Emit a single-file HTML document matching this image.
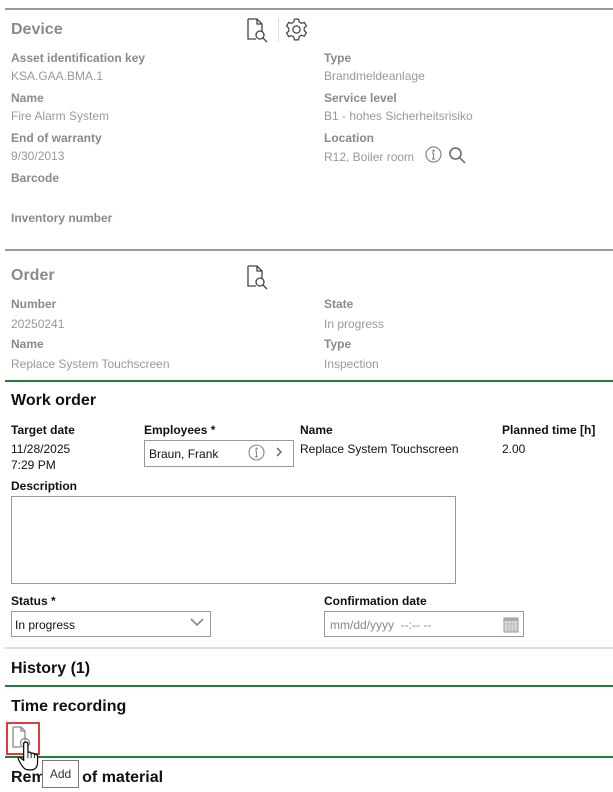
<!DOCTYPE html>
<html><head><meta charset="utf-8"><style>
body{margin:0;width:613px;height:792px;overflow:hidden;background:#fff;font-family:"Liberation Sans",sans-serif;position:relative}
div,span{position:absolute;white-space:nowrap}
.l{font-size:12px;font-weight:bold;color:#8a8a8a;line-height:14px}
.v{font-size:12px;color:#999;line-height:14px}
.lb{font-size:12px;font-weight:bold;color:#111;line-height:14px}
.vb{font-size:12px;color:#111;line-height:14px}
.h{font-size:16px;font-weight:bold;line-height:18px}
.hr{left:5px;right:0;height:2px}
.box{border:1px solid #999;background:#fff}
svg{position:absolute}
</style></head><body>
<div class="hr" style="top:8px;background:#9a9a9a"></div>
<div class="h" style="left:11px;top:21px;color:#8a8a8a">Device</div>
<svg style="left:245px;top:17px" width="26" height="26" viewBox="0 0 26 26" fill="none" stroke="#444" stroke-width="1.3"><path d="M3 2h9l5 5v8M3 2v20h8M12 2v5h5"/><circle cx="15" cy="18" r="4"/><path d="M18 21l4 4"/></svg>
<div style="left:278px;top:18px;width:1px;height:24px;background:#ddd"></div>
<svg style="left:284px;top:17px" width="25" height="25" viewBox="0 0 24 24" fill="none" stroke="#444" stroke-width="1.2"><circle cx="12" cy="12" r="3.5"/><path d="M10 2h4l.6 2.8 2.2 1.3 2.7-.9 2 3.4-2.1 1.9v2.6l2.1 1.9-2 3.4-2.7-.9-2.2 1.3L14 22h-4l-.6-2.8-2.2-1.3-2.7.9-2-3.4 2.1-1.9v-2.6L2.5 8.6l2-3.4 2.7.9 2.2-1.3z"/></svg>
<div class="l" style="left:11px;top:51px">Asset identification key</div>
<div class="v" style="left:11px;top:69px">KSA.GAA.BMA.1</div>
<div class="l" style="left:11px;top:91px">Name</div>
<div class="v" style="left:11px;top:109px">Fire Alarm System</div>
<div class="l" style="left:11px;top:131px">End of warranty</div>
<div class="v" style="left:11px;top:149px">9/30/2013</div>
<div class="l" style="left:11px;top:171px">Barcode</div>
<div class="l" style="left:11px;top:211px">Inventory number</div>
<div class="l" style="left:324px;top:51px">Type</div>
<div class="v" style="left:324px;top:69px">Brandmeldeanlage</div>
<div class="l" style="left:324px;top:91px">Service level</div>
<div class="v" style="left:324px;top:109px">B1 - hohes Sicherheitsrisiko</div>
<div class="l" style="left:324px;top:131px">Location</div>
<div class="v" style="left:324px;top:150px">R12, Boiler room</div>
<svg style="left:425px;top:146px" width="17" height="17" viewBox="0 0 17 17" fill="none" stroke="#888" stroke-width="1.2"><circle cx="8.5" cy="8.5" r="7.5"/><path d="M8.5 7v6M7 13h3M7 7h1.5"/><circle cx="8.5" cy="4.7" r=".6" fill="#888"/></svg>
<svg style="left:448px;top:146px" width="19" height="19" viewBox="0 0 19 19" fill="none" stroke="#777" stroke-width="1.8"><circle cx="7.5" cy="7.5" r="5.5"/><path d="M11.5 11.5l5.5 5.5"/></svg>

<div class="hr" style="top:249px;background:#9a9a9a"></div>
<div class="h" style="left:11px;top:267px;color:#8a8a8a">Order</div>
<svg style="left:245px;top:264px" width="26" height="26" viewBox="0 0 26 26" fill="none" stroke="#444" stroke-width="1.3"><path d="M3 2h9l5 5v8M3 2v20h8M12 2v5h5"/><circle cx="15" cy="18" r="4"/><path d="M18 21l4 4"/></svg>
<div class="l" style="left:11px;top:297px">Number</div>
<div class="v" style="left:11px;top:317px">20250241</div>
<div class="l" style="left:11px;top:337px">Name</div>
<div class="v" style="left:11px;top:357px">Replace System Touchscreen</div>
<div class="l" style="left:324px;top:297px">State</div>
<div class="v" style="left:324px;top:317px">In progress</div>
<div class="l" style="left:324px;top:337px">Type</div>
<div class="v" style="left:324px;top:357px">Inspection</div>

<div class="hr" style="top:380px;background:#1e7e3e"></div>
<div class="h" style="left:11px;top:392px;color:#111">Work order</div>
<div class="lb" style="left:11px;top:423px">Target date</div>
<div class="vb" style="left:11px;top:442px">11/28/2025</div>
<div class="vb" style="left:11px;top:458px">7:29 PM</div>
<div class="lb" style="left:144px;top:423px">Employees *</div>
<div class="box" style="left:144px;top:440px;width:148px;height:25px"></div>
<div class="vb" style="left:149px;top:447px">Braun, Frank</div>
<svg style="left:248px;top:444px" width="17" height="17" viewBox="0 0 17 17" fill="none" stroke="#888" stroke-width="1.1"><circle cx="8.5" cy="8.5" r="7.5"/><path d="M8.5 7v6M7 13h3M7 7h1.5"/><circle cx="8.5" cy="4.7" r=".6" fill="#888"/></svg>
<svg style="left:274px;top:446px" width="10" height="12" viewBox="0 0 10 12" fill="none" stroke="#777" stroke-width="1.6"><path d="M3 2l4 4-4 4"/></svg>
<div class="lb" style="left:300px;top:423px">Name</div>
<div class="vb" style="left:300px;top:442px">Replace System Touchscreen</div>
<div class="lb" style="left:502px;top:423px">Planned time [h]</div>
<div class="vb" style="left:502px;top:442px">2.00</div>
<div class="lb" style="left:11px;top:479px">Description</div>
<div class="box" style="left:11px;top:496px;width:443px;height:86px"></div>
<div class="lb" style="left:11px;top:594px">Status *</div>
<div class="box" style="left:11px;top:611px;width:198px;height:24px"></div>
<div class="vb" style="left:15px;top:618px">In progress</div>
<svg style="left:190px;top:617px" width="14" height="10" viewBox="0 0 14 10" fill="none" stroke="#888" stroke-width="1.6"><path d="M1 2l6 6 6-6"/></svg>
<div class="lb" style="left:324px;top:594px">Confirmation date</div>
<div class="box" style="left:324px;top:611px;width:198px;height:24px"></div>
<div class="v" style="left:330px;top:618px;color:#888">mm/dd/yyyy&nbsp; --:-- --</div>
<svg style="left:503px;top:615px" width="16" height="18" viewBox="0 0 16 18"><rect x="1" y="3" width="14" height="14" fill="#ddd" stroke="#999"/><rect x="1" y="3" width="14" height="3" fill="#aaa"/><path d="M1 9h14M1 12h14M1 15h14M5 6v11M8 6v11M11 6v11" stroke="#aaa" stroke-width=".6"/></svg>

<div class="hr" style="top:647px;background:#ddd"></div>
<div class="h" style="left:11px;top:660px;color:#111">History (1)</div>
<div class="hr" style="top:685px;background:#1e7e3e"></div>
<div class="h" style="left:11px;top:698px;color:#111">Time recording</div>
<div style="left:6px;top:722px;width:30px;height:29px;border:2px solid #e03c3c"></div>
<svg style="left:11px;top:726px" width="22" height="24" viewBox="0 0 22 24" fill="none" stroke="#888" stroke-width="1.3"><path d="M2 1h8l4 4v9M2 1v20h8M10 1v4h4"/><circle cx="14" cy="17" r="4.5"/><path d="M14 14.5v5M11.5 17h5"/></svg>
<div class="hr" style="top:756px;background:#1e7e3e"></div>
<div class="h" style="left:11px;top:769px;color:#111">Removal of material</div>
<div style="left:42px;top:760px;width:35px;height:26px;border:1px solid #777;background:#fff;font-size:12px;line-height:26px;text-align:center;color:#333">Add</div>
<svg style="left:17px;top:740px" width="24" height="32" viewBox="0 0 22 30"><path d="M8 2c1.5 0 2 1 2 2v8c.5-1 3-1 3 1 .5-1 3-1 3 1 .5-1 3-.5 3 1v6c0 4-2 7-6 7h-3c-3 0-5-3-7-6l-2-4c-.5-1.5 1-2.5 2.5-1L6 19V4c0-1 .5-2 2-2z" fill="#fff" stroke="#000" stroke-width="1.1"/><path d="M10 12v5M13 13v4M16 14v3" stroke="#000" stroke-width=".8"/></svg>
</body></html>
